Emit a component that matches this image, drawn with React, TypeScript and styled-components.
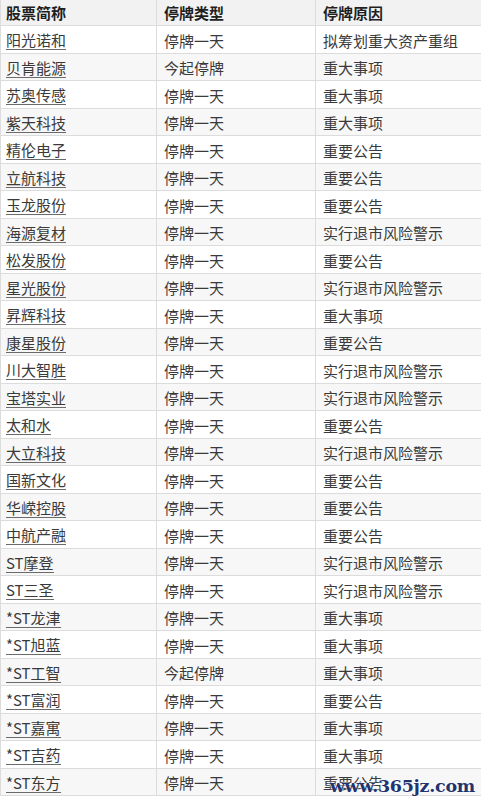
import React from "react";
import styled, { createGlobalStyle } from "styled-components";

const Global = createGlobalStyle`
  html, body { margin: 0; padding: 0; background: #fff; overflow: hidden; }
  body { font-family: "Microsoft YaHei", "Noto Sans CJK SC", sans-serif; }
`;

const Page = styled.div`
  position: relative;
  width: 481px;
  height: 800px;
  overflow: hidden;
`;

const Table = styled.div`
  width: 481px;
  border-left: 1px solid #dcdcdc;
  box-sizing: border-box;
`;

const Row = styled.div<{ $bg: string; $h: number }>`
  display: grid;
  grid-template-columns: 156px 159px 1fr;
  height: ${(p) => p.$h}px;
  box-sizing: border-box;
  border-bottom: 1px solid #dcdcdc;
  background: ${(p) => p.$bg};
`;

const Cell = styled.div<{ $head?: boolean; $pad: number }>`
  display: flex;
  align-items: center;
  padding-left: ${(p) => p.$pad}px;
  padding-top: ${(p) => (p.$head ? 0 : 2)}px;
  box-sizing: border-box;
  font-size: 15px;
  font-weight: ${(p) => (p.$head ? 700 : 400)};
  color: ${(p) => (p.$head ? "#1f1f1f" : "#3a3a3a")};
  border-right: 1px solid #dcdcdc;
  white-space: nowrap;
  &:last-child { border-right: none; }
`;

const Link = styled.span`
  display: inline-block;
  line-height: 19px;
  border-bottom: 1px solid #6a6a6a;
  color: #3a3a3a;
`;

const Watermark = styled.div`
  position: absolute;
  right: 6px;
  bottom: 4px;
  font-family: "DejaVu Serif", serif;
  font-size: 17.5px;
  font-weight: 700;
  letter-spacing: -0.3px;
  color: #22336e;
  text-shadow: 0 0 2px #fff, 0 0 2px #fff;
`;

const rows: [string, string, string][] = [
  ["阳光诺和", "停牌一天", "拟筹划重大资产重组"],
  ["贝肯能源", "今起停牌", "重大事项"],
  ["苏奥传感", "停牌一天", "重大事项"],
  ["紫天科技", "停牌一天", "重大事项"],
  ["精伦电子", "停牌一天", "重要公告"],
  ["立航科技", "停牌一天", "重要公告"],
  ["玉龙股份", "停牌一天", "重要公告"],
  ["海源复材", "停牌一天", "实行退市风险警示"],
  ["松发股份", "停牌一天", "重要公告"],
  ["星光股份", "停牌一天", "实行退市风险警示"],
  ["昇辉科技", "停牌一天", "重大事项"],
  ["康星股份", "停牌一天", "重要公告"],
  ["川大智胜", "停牌一天", "实行退市风险警示"],
  ["宝塔实业", "停牌一天", "实行退市风险警示"],
  ["太和水", "停牌一天", "重要公告"],
  ["大立科技", "停牌一天", "实行退市风险警示"],
  ["国新文化", "停牌一天", "重要公告"],
  ["华嵘控股", "停牌一天", "重要公告"],
  ["中航产融", "停牌一天", "重要公告"],
  ["ST摩登", "停牌一天", "实行退市风险警示"],
  ["ST三圣", "停牌一天", "实行退市风险警示"],
  ["*ST龙津", "停牌一天", "重大事项"],
  ["*ST旭蓝", "停牌一天", "重大事项"],
  ["*ST工智", "今起停牌", "重大事项"],
  ["*ST富润", "停牌一天", "重要公告"],
  ["*ST嘉寓", "停牌一天", "重大事项"],
  ["*ST吉药", "停牌一天", "重大事项"],
  ["*ST东方", "停牌一天", "重要公告"],
];

export default function App() {
  return (
    <Page>
      <Global />
      <Table>
        <Row $bg="#f2f2f2" $h={26}>
          <Cell $head $pad={5}>股票简称</Cell>
          <Cell $head $pad={7}>停牌类型</Cell>
          <Cell $head $pad={7}>停牌原因</Cell>
        </Row>
        {rows.map((r, i) => (
          <Row key={i} $bg={i % 2 === 0 ? "#ffffff" : "#f7f7f7"} $h={27.5}>
            <Cell $pad={5}>
              <Link>{r[0]}</Link>
            </Cell>
            <Cell $pad={7}>{r[1]}</Cell>
            <Cell $pad={7}>{r[2]}</Cell>
          </Row>
        ))}
      </Table>
      <Watermark>www.365jz.com</Watermark>
    </Page>
  );
}
